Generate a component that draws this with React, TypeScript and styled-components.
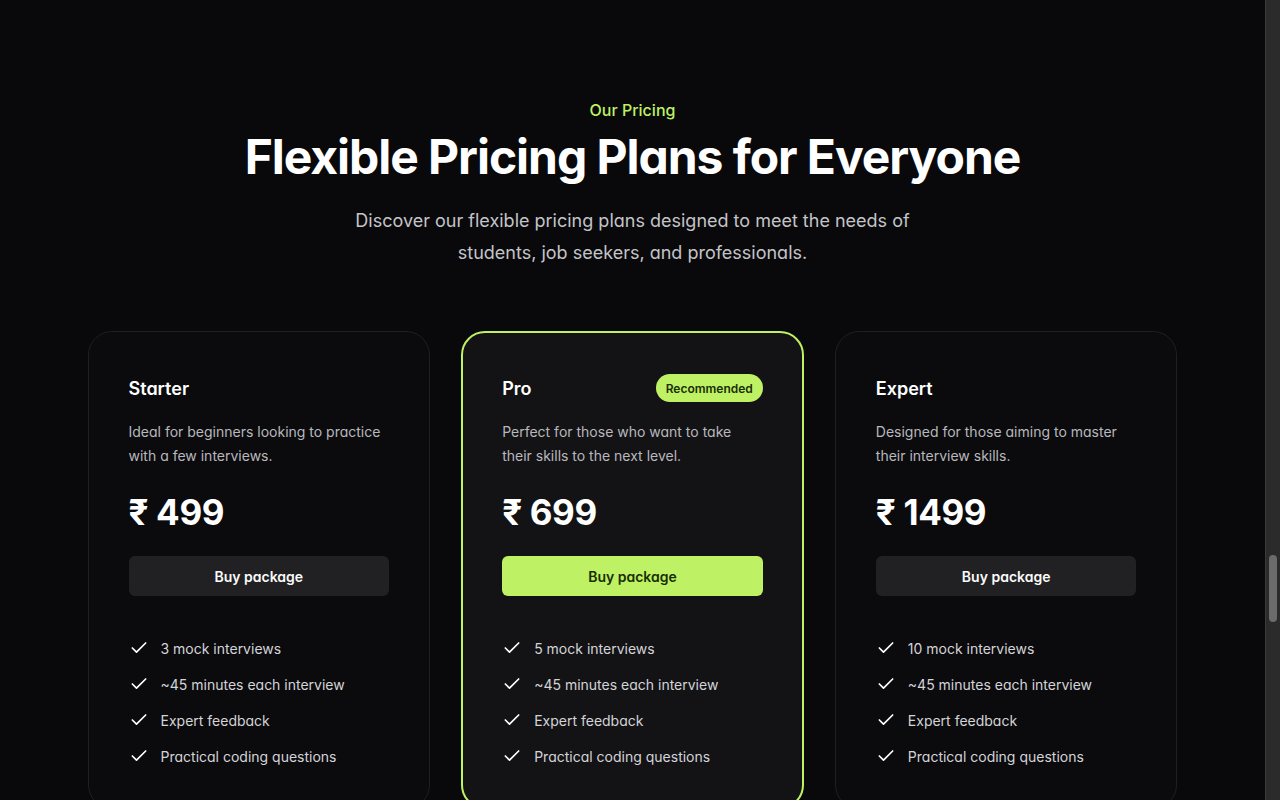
import React from "react";
import styled, { createGlobalStyle } from "styled-components";
import { Check } from "lucide-react";

const Global = createGlobalStyle`
  html, body { margin: 0; padding: 0; background: #09090b; }
  body {
    font-family: Inter, "Noto Sans", sans-serif;
    font-feature-settings: "cv11" 1;
    color: #fafafa;
    -webkit-font-smoothing: antialiased;
  }
  * { box-sizing: border-box; }
`;

const Page = styled.div`
  width: calc(100% - 15px);
  height: 800px;
  overflow: hidden;
`;

const Section = styled.section`
  padding: 98px 32px 0;
  display: flex;
  flex-direction: column;
  align-items: center;
`;

const Eyebrow = styled.p`
  margin: 0;
  font-size: 16px;
  line-height: 24px;
  font-weight: 500;
  color: #bef264;
`;

const Title = styled.h1`
  margin: 7px 0 0;
  font-size: 48px;
  line-height: 56px;
  font-weight: 700;
  letter-spacing: -0.022em;
  color: #ffffff;
`;

const Subtitle = styled.p`
  margin: 20px 0 0;
  max-width: 580px;
  text-align: center;
  font-size: 18px;
  line-height: 32px;
  color: #c4c4c8;
`;

const Grid = styled.div`
  margin-top: 62px;
  width: 1090px;
  display: grid;
  grid-template-columns: repeat(3, 1fr);
  gap: 31px;
`;

const Card = styled.div<{ $featured?: boolean }>`
  border-radius: 24px;
  border: ${(p) => (p.$featured ? "2px solid #bef264" : "1px solid #1f1f23")};
  background: ${(p) => (p.$featured ? "#131315" : "#0b0b0d")};
  padding: ${(p) => (p.$featured ? "39px" : "40px")};
  display: flex;
  flex-direction: column;
`;

const Header = styled.div`
  height: 32px;
  display: flex;
  align-items: center;
  justify-content: space-between;
`;

const PlanName = styled.h3`
  margin: 0;
  font-size: 18px;
  font-weight: 600;
  color: #ffffff;
`;

const Badge = styled.span`
  height: 28px;
  padding: 0 10px;
  border-radius: 999px;
  background: #bef264;
  color: #1a2e05;
  font-size: 12px;
  font-weight: 600;
  display: inline-flex;
  align-items: center;
`;

const Desc = styled.p`
  margin: 16px 0 0;
  font-size: 14px;
  line-height: 24px;
  color: #b8b8bd;
  max-width: 260px;
`;

const Price = styled.div`
  margin-top: 24px;
  font-size: 35px;
  line-height: 40px;
  font-weight: 700;
  letter-spacing: -0.01em;
  color: #ffffff;
`;

const BuyButton = styled.button<{ $featured?: boolean }>`
  margin-top: 24px;
  height: 40px;
  width: 100%;
  border: none;
  border-radius: 6px;
  background: ${(p) => (p.$featured ? "#bef264" : "#212123")};
  color: ${(p) => (p.$featured ? "#1a2e05" : "#fafafa")};
  font-family: inherit;
  font-feature-settings: "cv11" 1;
  font-size: 14px;
  font-weight: 600;
  cursor: pointer;
`;

const Features = styled.ul`
  list-style: none;
  margin: 40px 0 0;
  padding: 0;
  display: flex;
  flex-direction: column;
  gap: 12px;
`;

const Feature = styled.li`
  height: 24px;
  display: flex;
  align-items: center;
  gap: 12px;
  font-size: 14px;
  color: #d4d4d8;
`;

const Scrollbar = styled.div`
  position: fixed;
  top: 0;
  right: 0;
  width: 15px;
  height: 100vh;
  background: #2b2b2b;
  border-left: 1px solid #3a3a3a;
`;

const Thumb = styled.div`
  position: absolute;
  left: 3px;
  top: 555px;
  width: 8px;
  height: 67px;
  border-radius: 4px;
  background: #6b6b6b;
`;

type Plan = {
  name: string;
  desc: string;
  price: string;
  interviews: string;
  featured?: boolean;
};

const plans: Plan[] = [
  {
    name: "Starter",
    desc: "Ideal for beginners looking to practice with a few interviews.",
    price: "₹ 499",
    interviews: "3 mock interviews",
  },
  {
    name: "Pro",
    desc: "Perfect for those who want to take their skills to the next level.",
    price: "₹ 699",
    interviews: "5 mock interviews",
    featured: true,
  },
  {
    name: "Expert",
    desc: "Designed for those aiming to master their interview skills.",
    price: "₹ 1499",
    interviews: "10 mock interviews",
  },
];

export default function App() {
  return (
    <>
      <Global />
      <Page>
        <Section>
          <Eyebrow>Our Pricing</Eyebrow>
          <Title>Flexible Pricing Plans for Everyone</Title>
          <Subtitle>
            Discover our flexible pricing plans designed to meet the needs of students, job seekers, and professionals.
          </Subtitle>
          <Grid>
            {plans.map((p) => (
              <Card key={p.name} $featured={p.featured}>
                <Header>
                  <PlanName>{p.name}</PlanName>
                  {p.featured && <Badge>Recommended</Badge>}
                </Header>
                <Desc>{p.desc}</Desc>
                <Price>{p.price}</Price>
                <BuyButton $featured={p.featured}>Buy package</BuyButton>
                <Features>
                  {[p.interviews, "~45 minutes each interview", "Expert feedback", "Practical coding questions"].map((f) => (
                    <Feature key={f}>
                      <Check size={20} strokeWidth={2} color="#ffffff" />
                      {f}
                    </Feature>
                  ))}
                </Features>
              </Card>
            ))}
          </Grid>
        </Section>
      </Page>
      <Scrollbar>
        <Thumb />
      </Scrollbar>
    </>
  );
}
